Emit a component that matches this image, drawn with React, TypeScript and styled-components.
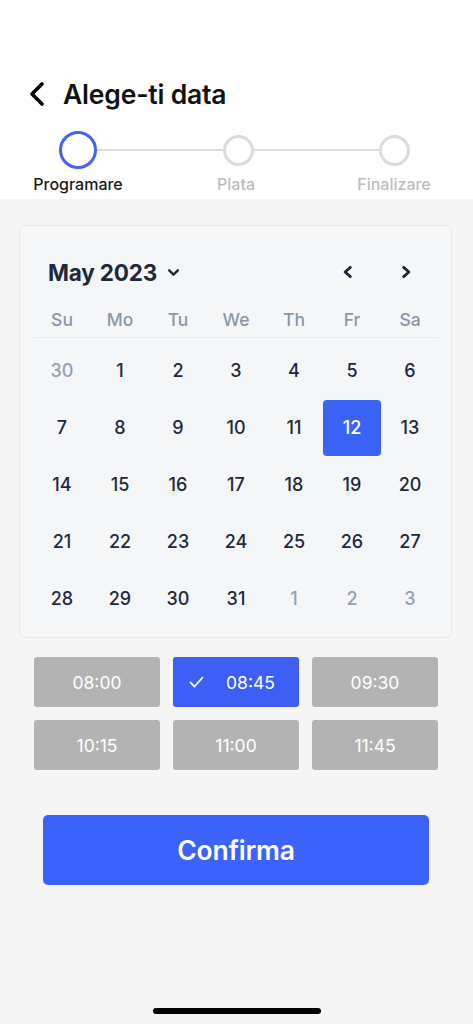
import React from "react";
import styled, { createGlobalStyle } from "styled-components";

const Global = createGlobalStyle`
  html, body { margin: 0; padding: 0; background: #f5f5f5; }
  body { font-family: Inter, "Noto Sans", Roboto, sans-serif; -webkit-font-smoothing: antialiased; }
  * { box-sizing: border-box; }
`;

const Page = styled.div`
  width: 473px;
  min-height: 100vh;
  display: flex;
  flex-direction: column;
  background: #f5f5f5;
`;

const Header = styled.header`
  background: #ffffff;
  padding-top: 78px;
  height: 199px;
`;

const TitleRow = styled.div`
  display: flex;
  align-items: center;
  height: 32px;
  padding-left: 27px;
  gap: 16px;
`;

const Title = styled.h1`
  margin: 0;
  font-size: 26.5px;
  font-weight: 600;
  color: #111;
  letter-spacing: -0.2px;
  line-height: 32px;
`;

const StepTrack = styled.div`
  display: flex;
  align-items: center;
  height: 40px;
  margin-top: 20px;
  padding-left: 59px;
  padding-right: 63px;
`;

const StepCircle = styled.div<{ $active?: boolean }>`
  flex: none;
  width: ${(p) => (p.$active ? 38 : 31)}px;
  height: ${(p) => (p.$active ? 38 : 31)}px;
  border-radius: 50%;
  border: ${(p) => (p.$active ? "3.5px solid #4562f2" : "3px solid #dcdcdc")};
  background: #fff;
`;

const StepLine = styled.div`
  flex: 1;
  height: 2px;
  background: #dcdcdc;
`;

const StepLabels = styled.div`
  display: grid;
  grid-template-columns: repeat(3, 120px);
  column-gap: 38px;
  padding-left: 18px;
  margin-top: 3px;
`;

const StepLabel = styled.span<{ $active?: boolean }>`
  text-align: center;
  font-size: 16px;
  line-height: 22px;
  font-weight: 500;
  color: ${(p) => (p.$active ? "#1a1a1a" : "#bdbdbd")};
`;

const Card = styled.section`
  margin: 26px 21px 0 19px;
  border: 1px solid #e4e7eb;
  border-radius: 6px;
  background: #f5f6f7;
  padding: 0 13px 10px 13px;
`;

const CalHeader = styled.div`
  display: flex;
  align-items: center;
  height: 50px;
  margin-top: 21px;
  padding-left: 15px;
`;

const MonthTitle = styled.div`
  display: flex;
  align-items: center;
  gap: 10px;
  font-size: 22.5px;
  font-weight: 700;
  color: #1e293b;
  letter-spacing: -0.2px;
`;

const NavGroup = styled.div`
  margin-left: auto;
  display: flex;
  gap: 38px;
  padding-right: 22px;
`;

const NavBtn = styled.button`
  border: none;
  background: none;
  padding: 0;
  width: 20px;
  height: 20px;
  display: flex;
  align-items: center;
  justify-content: center;
  cursor: pointer;
`;

const Grid = styled.div`
  display: grid;
  grid-template-columns: repeat(7, 58px);
`;

const WeekRow = styled(Grid)`
  height: 41px;
  padding-top: 5px;
  align-items: center;
  border-bottom: 1px solid #e8eaee;
`;

const WeekDay = styled.span`
  text-align: center;
  font-size: 17.5px;
  font-weight: 500;
  color: #8c96a8;
`;

const DaysGrid = styled(Grid)`
  grid-auto-rows: 57px;
  padding-top: 4px;
`;

const DayCell = styled.div<{ $muted?: boolean; $selected?: boolean }>`
  display: flex;
  align-items: center;
  justify-content: center;
  height: 56px;
  align-self: center;
  border-radius: 4px;
  font-size: 18px;
  font-weight: 500;
  background: ${(p) => (p.$selected ? "#3a63f5" : "transparent")};
  color: ${(p) => (p.$selected ? "#fff" : p.$muted ? "#94a0b4" : "#1e293b")};
`;

const Slots = styled.div`
  display: grid;
  grid-template-columns: repeat(3, 126px);
  grid-auto-rows: 50px;
  gap: 13px;
  margin: 19px 0 0 34px;
`;

const Slot = styled.button<{ $selected?: boolean }>`
  border: none;
  border-radius: 3px;
  background: ${(p) => (p.$selected ? "#3d5ff5" : "#b3b3b3")};
  color: #fff;
  font-family: inherit;
  font-size: 17.5px;
  font-weight: 400;
  display: flex;
  align-items: center;
  justify-content: center;
  gap: 22px;
  padding: 0;
  padding-right: ${(p) => (p.$selected ? "8px" : "0")};
`;

const Confirm = styled.button`
  margin: 45px 0 0 43px;
  width: 386px;
  height: 70px;
  border: none;
  border-radius: 5px;
  background: #3d62fb;
  color: #fff;
  font-family: inherit;
  font-size: 26.5px;
  font-weight: 600;
  letter-spacing: -0.2px;
`;

const Spacer = styled.div`
  flex: 1;
`;

const HomeBar = styled.div`
  align-self: center;
  width: 168px;
  height: 6px;
  border-radius: 3px;
  background: #000;
  margin-bottom: 10px;
`;

const Chevron = ({ dir, size = 12, stroke = 2.6, color = "#1e293b" }: { dir: "left" | "right" | "down"; size?: number; stroke?: number; color?: string }) => {
  const d =
    dir === "left" ? "M8 2 L3.5 6 L8 10" : dir === "right" ? "M4 2 L8.5 6 L4 10" : "M2 4 L6 8 L10 4";
  return (
    <svg width={size} height={size} viewBox="0 0 12 12" fill="none">
      <path d={d} stroke={color} strokeWidth={stroke} strokeLinecap="round" strokeLinejoin="round" />
    </svg>
  );
};

const BackIcon = () => (
  <svg width="20" height="26" viewBox="0 0 20 26" fill="none">
    <path d="M15 3 L5 13 L15 23" stroke="#000" strokeWidth="3.6" strokeLinecap="round" strokeLinejoin="round" />
  </svg>
);

const Check = () => (
  <svg width="15" height="12" viewBox="0 0 15 12" fill="none">
    <path d="M1.5 6.5 L5.5 10.5 L13.5 1.5" stroke="#fff" strokeWidth="1.8" strokeLinecap="round" strokeLinejoin="round" />
  </svg>
);

const weekDays = ["Su", "Mo", "Tu", "We", "Th", "Fr", "Sa"];
const days: { n: number; muted?: boolean }[] = [
  { n: 30, muted: true },
  ...Array.from({ length: 31 }, (_, i) => ({ n: i + 1 })),
  { n: 1, muted: true },
  { n: 2, muted: true },
  { n: 3, muted: true },
];
const slots = ["08:00", "08:45", "09:30", "10:15", "11:00", "11:45"];

export default function App() {
  return (
    <Page>
      <Global />
      <Header>
        <TitleRow>
          <BackIcon />
          <Title>Alege-ti data</Title>
        </TitleRow>
        <StepTrack>
          <StepCircle $active />
          <StepLine />
          <StepCircle />
          <StepLine />
          <StepCircle />
        </StepTrack>
        <StepLabels>
          <StepLabel $active>Programare</StepLabel>
          <StepLabel>Plata</StepLabel>
          <StepLabel>Finalizare</StepLabel>
        </StepLabels>
      </Header>

      <Card>
        <CalHeader>
          <MonthTitle>
            May 2023
            <Chevron dir="down" size={13} stroke={2.2} />
          </MonthTitle>
          <NavGroup>
            <NavBtn aria-label="previous">
              <Chevron dir="left" size={14} stroke={2.4} />
            </NavBtn>
            <NavBtn aria-label="next">
              <Chevron dir="right" size={14} stroke={2.4} />
            </NavBtn>
          </NavGroup>
        </CalHeader>
        <WeekRow>
          {weekDays.map((d) => (
            <WeekDay key={d}>{d}</WeekDay>
          ))}
        </WeekRow>
        <DaysGrid>
          {days.map((d, i) => (
            <DayCell key={i} $muted={d.muted} $selected={!d.muted && d.n === 12}>
              {d.n}
            </DayCell>
          ))}
        </DaysGrid>
      </Card>

      <Slots>
        {slots.map((s) => (
          <Slot key={s} $selected={s === "08:45"}>
            {s === "08:45" && <Check />}
            {s}
          </Slot>
        ))}
      </Slots>

      <Confirm>Confirma</Confirm>
      <Spacer />
      <HomeBar />
    </Page>
  );
}
